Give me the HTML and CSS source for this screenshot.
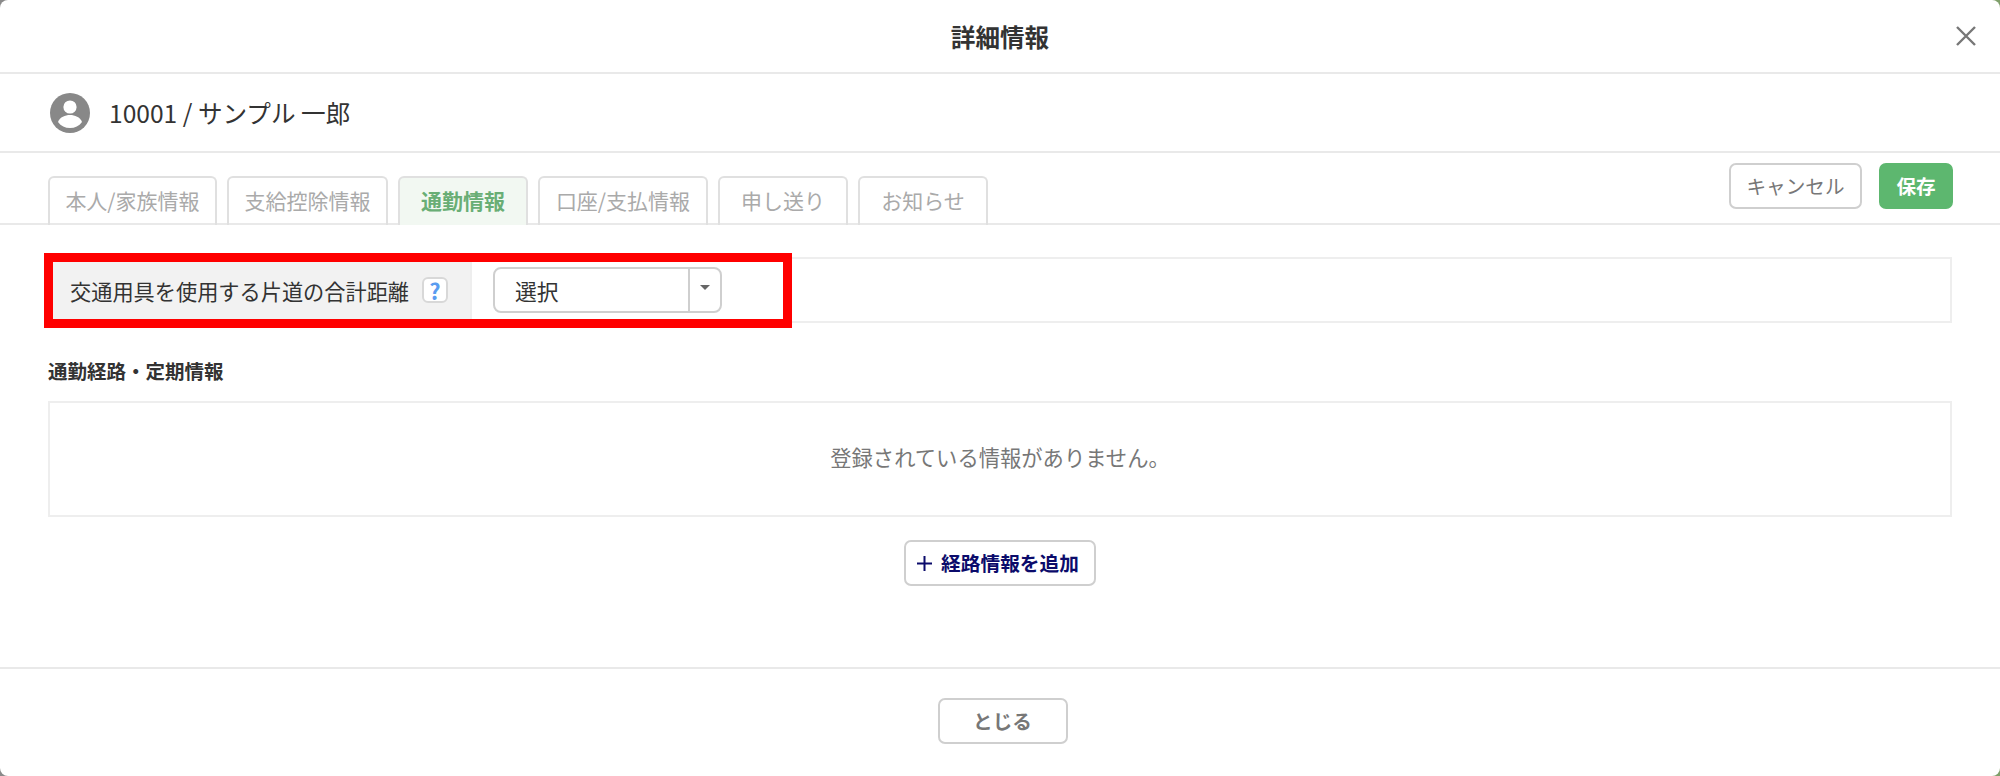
FILE: index.html
```html
<!DOCTYPE html>
<html lang="ja">
<head>
<meta charset="utf-8">
<title>詳細情報</title>
<link rel="stylesheet" href="styles.css">
</head>
<body>
<div class="modal">
  <header class="modal-head">
    <h1 class="modal-title">詳細情報</h1>
    <button class="close" aria-label="閉じる">
      <svg width="20" height="20" viewBox="0 0 20 20"><path d="M1 1L19 19M19 1L1 19" stroke="#777" stroke-width="2.4" fill="none"/></svg>
    </button>
  </header>
  <div class="user-row">
    <svg class="user-icon" width="40" height="40" viewBox="0 0 40 40">
      <circle cx="20" cy="20" r="20" fill="#888"/>
      <circle cx="20" cy="14" r="6.6" fill="#fff"/>
      <path d="M8 29c2-5 7-7 12-7s10 2 12 7c-3 4-7 6-12 6s-9-2-12-6z" fill="#fff"/>
    </svg>
    <span class="user-name">10001 / サンプル 一郎</span>
  </div>
  <div class="tab-bar">
    <nav class="tabs">
      <a class="tab t1">本人/家族情報</a>
      <a class="tab t2">支給控除情報</a>
      <a class="tab t3 active">通勤情報</a>
      <a class="tab t4">口座/支払情報</a>
      <a class="tab t5">申し送り</a>
      <a class="tab t6">お知らせ</a>
    </nav>
    <div class="actions">
      <button class="btn cancel">キャンセル</button>
      <button class="btn save">保存</button>
    </div>
  </div>
  <main class="content">
    <div class="form-row">
      <div class="form-label">
        <span>交通用具を使用する片道の合計距離</span>
        <span class="help">?</span>
      </div>
      <div class="form-field">
        <div class="select">
          <span class="select-value">選択</span>
          <span class="select-arrow"></span>
        </div>
      </div>
      <div class="highlight"></div>
    </div>
    <h2 class="section-title">通勤経路・定期情報</h2>
    <div class="empty">登録されている情報がありません。</div>
    <div class="add-wrap">
      <button class="btn add">
        <svg width="15" height="15" viewBox="0 0 15 15"><path d="M7.5 0V15M0 7.5H15" stroke="#0b0b6b" stroke-width="2" fill="none"/></svg>
        <span>経路情報を追加</span>
      </button>
    </div>
  </main>
  <footer class="modal-foot">
    <button class="btn close-btn">とじる</button>
  </footer>
</div>
</body>
</html>
```
FILE: styles.css
```css
* { box-sizing: border-box; }
html, body { margin: 0; height: 100%; overflow: hidden; }
body {
  background: linear-gradient(to left, #7f9f6a 20px, #8a8a8a 20px);
  font-family: "Noto Sans CJK JP", "Noto Sans", sans-serif;
  color: #333;
}
button { font-family: inherit; cursor: pointer; }
.modal {
  width: 100%;
  height: 100%;
  background: #fff;
  border-radius: 8px;
  display: flex;
  flex-direction: column;
}
.modal-head {
  height: 74px;
  border-bottom: 2px solid #e9e9e9;
  display: flex;
  align-items: center;
  justify-content: center;
  position: relative;
}
.modal-title { margin: 0; font-size: 24.6px; font-weight: 700; line-height: 1; color: #333; }
.close {
  position: absolute;
  top: 26px;
  right: 24px;
  width: 20px;
  height: 20px;
  padding: 0;
  border: 0;
  background: none;
  display: flex;
}
.user-row {
  height: 79px;
  border-bottom: 2px solid #e9e9e9;
  padding-left: 50px;
  display: flex;
  align-items: center;
  gap: 19px;
}
.user-name { font-size: 24.6px; line-height: 1; color: #333; }
.tab-bar {
  height: 72px;
  border-bottom: 2px solid #e9e9e9;
  padding: 0 47px 0 48px;
  display: flex;
  justify-content: space-between;
}
.tabs { display: flex; gap: 10px; padding-top: 23px; }
.tab {
  height: 49px;
  border: 2px solid #e0e0e0;
  border-bottom: 0;
  border-radius: 6px 6px 0 0;
  font-size: 21px;
  line-height: 45px;
  color: #aaa;
  text-align: center;
}
.t1 { width: 169px; }
.t2 { width: 161px; }
.t3 { width: 130px; }
.t4 { width: 170px; }
.t5, .t6 { width: 130px; }
.tab.active { background: #f2f8f2; color: #69ae75; font-weight: 700; }
.actions { display: flex; gap: 17px; padding-top: 10px; }
.btn {
  height: 46px;
  border: 2px solid #cfcfcf;
  border-radius: 7px;
  background: #fff;
  font-size: 19.6px;
  line-height: 1;
  padding: 0;
  color: #777;
}
.cancel { width: 133px; }
.save { width: 74px; background: #5db76f; border-color: #5db76f; color: #fff; font-weight: 700; }
.content { flex: 1; padding: 32px 48px 0; }
.form-row {
  height: 66px;
  border: 2px solid #eee;
  display: flex;
  position: relative;
}
.form-label {
  width: 422px;
  background: #f2f2f2;
  border-right: 2px solid #eee;
  padding: 0 0 0 20px;
  display: flex;
  align-items: center;
  gap: 13px;
  font-size: 21.2px;
  color: #333;
}
.help {
  width: 26px;
  height: 26px;
  background: #fff;
  border: 2px solid #d8d8d8;
  border-radius: 6px;
  color: #5a9cf0;
  font-size: 22px;
  font-weight: 700;
  line-height: 22px;
  text-align: center;
}
.form-field { padding: 8px 0 0 21px; }
.select {
  width: 229px;
  height: 46px;
  border: 2px solid #cfcfcf;
  border-radius: 8px;
  display: flex;
  align-items: center;
}
.select-value { flex: 1; padding-left: 20px; font-size: 21.8px; color: #333; }
.select-arrow {
  width: 32px;
  height: 100%;
  border-left: 2px solid #cfcfcf;
  display: flex;
  align-items: center;
  justify-content: center;
}
.select-arrow::after {
  content: "";
  border: 5px solid transparent;
  border-top: 5px solid #666;
  border-bottom: 0;
  margin-top: -6px;
}
.highlight {
  position: absolute;
  left: -6px;
  top: -6px;
  width: 748px;
  height: 75px;
  border: 9px solid #f00;
  pointer-events: none;
}
.section-title { margin: 34px 0 16px; font-size: 19.5px; line-height: 28px; font-weight: 700; color: #333; }
.empty {
  height: 116px;
  border: 2px solid #eee;
  padding-bottom: 6px;
  display: flex;
  align-items: center;
  justify-content: center;
  font-size: 21.3px;
  color: #777;
}
.add-wrap { display: flex; justify-content: center; padding-top: 23px; }
.add {
  width: 192px;
  height: 46px;
  padding-right: 4px;
  display: flex;
  align-items: center;
  justify-content: center;
  gap: 9px;
  font-size: 19.7px;
  color: #0b0b6b;
  font-weight: 700;
}
.modal-foot {
  height: 109px;
  border-top: 2px solid #e9e9e9;
  display: flex;
  justify-content: center;
  padding: 29px 0 0 5px;
}
.close-btn { width: 130px; font-weight: 700; }
```
